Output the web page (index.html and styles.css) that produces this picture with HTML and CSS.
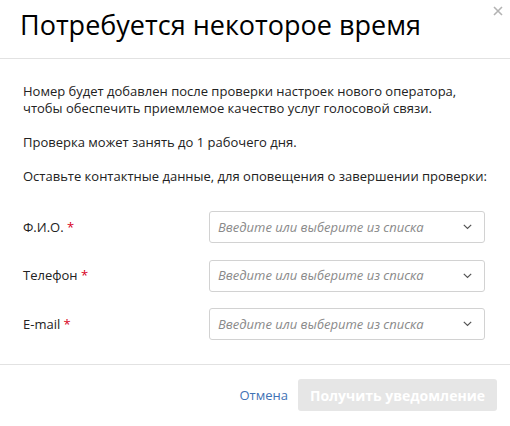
FILE: index.html
```html
<!DOCTYPE html>
<html lang="ru">
<head>
<meta charset="utf-8">
<title>Потребуется некоторое время</title>
<link rel="stylesheet" href="styles.css">
</head>
<body>
<div class="dialog">
  <button class="close" aria-label="Закрыть">
    <svg width="10" height="10" viewBox="0 0 10 10"><path d="M1 1L9 9M9 1L1 9" stroke="#b3b3b3" stroke-width="1.6" fill="none"/></svg>
  </button>
  <header class="dialog-head">
    <h1 class="dialog-title">Потребуется некоторое время</h1>
  </header>
  <section class="dialog-body">
    <p>Номер будет добавлен после проверки настроек нового оператора,<br>чтобы обеспечить приемлемое качество услуг голосовой связи.</p>
    <p>Проверка может занять до 1 рабочего дня.</p>
    <p>Оставьте контактные данные, для оповещения о завершении проверки:</p>
    <div class="form">
      <div class="field">
        <label class="field-label">Ф.И.О. <span class="req">*</span></label>
        <div class="select">
          <span class="placeholder">Введите или выберите из списка</span>
          <svg class="chev" width="9" height="6" viewBox="0 0 9 6"><path d="M0.8 0.8L4.5 4.5L8.2 0.8" stroke="#555" stroke-width="1.2" fill="none"/></svg>
        </div>
      </div>
      <div class="field">
        <label class="field-label">Телефон <span class="req">*</span></label>
        <div class="select">
          <span class="placeholder">Введите или выберите из списка</span>
          <svg class="chev" width="9" height="6" viewBox="0 0 9 6"><path d="M0.8 0.8L4.5 4.5L8.2 0.8" stroke="#555" stroke-width="1.2" fill="none"/></svg>
        </div>
      </div>
      <div class="field">
        <label class="field-label">E-mail <span class="req">*</span></label>
        <div class="select">
          <span class="placeholder">Введите или выберите из списка</span>
          <svg class="chev" width="9" height="6" viewBox="0 0 9 6"><path d="M0.8 0.8L4.5 4.5L8.2 0.8" stroke="#555" stroke-width="1.2" fill="none"/></svg>
        </div>
      </div>
    </div>
  </section>
  <footer class="dialog-foot">
    <a class="cancel" href="#">Отмена</a>
    <button class="submit" disabled>Получить уведомление</button>
  </footer>
</div>
</body>
</html>
```
FILE: styles.css
```css
* { box-sizing: border-box; }

html, body {
  margin: 0;
  background: #fff;
}

body {
  font-family: "Open Sans", "Noto Sans", sans-serif;
  color: #222;
}

.dialog {
  position: relative;
  width: 510px;
  height: 426px;
  background: #fff;
}

.close {
  position: absolute;
  top: 6px;
  right: 7px;
  width: 10px;
  height: 10px;
  padding: 0;
  border: 0;
  background: none;
  display: flex;
}

.dialog-head {
  height: 59px;
  padding: 7px 20px 0;
  border-bottom: 1px solid #e2e2e2;
}

.dialog-title {
  margin: 0;
  font-size: 27px;
  font-weight: 400;
  line-height: 36px;
  color: #000;
}

.dialog-body {
  padding: 24px 10px 0 23px;
  font-size: 13px;
  line-height: 17px;
}

.dialog-body p {
  margin: 0 0 17px;
  white-space: nowrap;
}

.form {
  display: flex;
  flex-direction: column;
  gap: 16.5px;
  margin: 26px 15px 0 0;
  padding-bottom: 24px;
}

.field {
  display: flex;
  align-items: center;
}

.field-label {
  width: 186px;
  font-size: 13px;
  color: #222;
}

.req {
  color: #d8001b;
}

.select {
  flex: 1;
  height: 32px;
  border: 1px solid #d2d2d2;
  border-radius: 3px;
  display: flex;
  align-items: center;
  justify-content: space-between;
  padding: 0 12px 0 8px;
}

.placeholder {
  font-style: italic;
  color: #8a8a8a;
  font-size: 13px;
}

.chev {
  display: block;
}

.dialog-foot {
  border-top: 1px solid #e2e2e2;
  display: flex;
  justify-content: flex-end;
  align-items: center;
  gap: 10px;
  padding: 14px 13px 0 0;
}

.cancel {
  font-size: 13px;
  color: #3f72b5;
  text-decoration: none;
}

.submit {
  height: 32px;
  width: 199px;
  border: 0;
  border-radius: 3px;
  background: #e6e6e6;
  color: #fff;
  font-family: "Open Sans", "Noto Sans", sans-serif;
  font-weight: 700;
  font-size: 14px;
  padding: 0;
}
```
